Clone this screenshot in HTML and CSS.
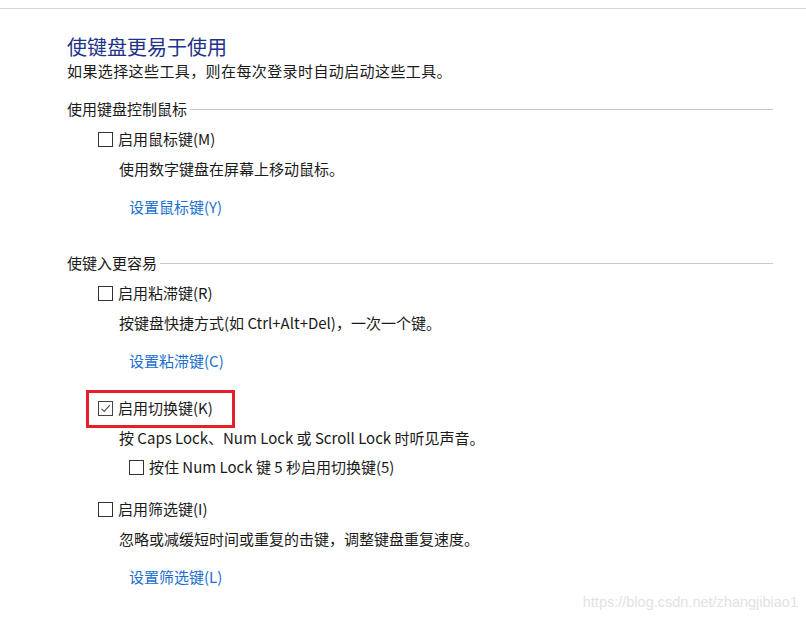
FILE: index.html
```html
<!DOCTYPE html>
<html lang="zh-CN">
<head>
    <meta charset="UTF-8">
    <title>使键盘更易于使用</title>
    <link rel="stylesheet" href="styles.css">
</head>
<body>
    <div class="top-line"></div>

    <div class="content">
        <h1 class="title">使键盘更易于使用</h1>
        <p class="subtitle">如果选择这些工具，则在每次登录时自动启动这些工具。</p>

        <!-- 鼠标键 -->
        <div class="group-header"><span>使用键盘控制鼠标</span></div>
        <div class="option">
            <span class="box"></span>启用鼠标键(M)
        </div>
        <p class="desc">使用数字键盘在屏幕上移动鼠标。</p>
        <a class="link">设置鼠标键(Y)</a>

        <!-- 键入 -->
        <div class="group-header group-two"><span>使键入更容易</span></div>
        <div class="option">
            <span class="box"></span>启用粘滞键(R)
        </div>
        <p class="desc">按键盘快捷方式(如 Ctrl+Alt+Del)，一次一个键。</p>
        <a class="link">设置粘滞键(C)</a>

        <div class="option option-marked">
            <span class="box checked">
                <svg width="13" height="13" viewBox="0 0 13 13"><path d="M2.5 6.8 L5.2 9.5 L10.8 3.2" fill="none" stroke="#555" stroke-width="1.2"/></svg>
            </span>启用切换键(K)
            <div class="mark"></div>
        </div>
        <p class="desc">按 Caps Lock、Num Lock 或 Scroll Lock 时听见声音。</p>
        <div class="option sub-option">
            <span class="box"></span>按住 Num Lock 键 5 秒启用切换键(5)
        </div>

        <div class="option option-filter">
            <span class="box"></span>启用筛选键(I)
        </div>
        <p class="desc">忽略或减缓短时间或重复的击键，调整键盘重复速度。</p>
        <a class="link">设置筛选键(L)</a>
    </div>

    <div class="watermark">https://blog.csdn.net/zhangjibiao1</div>
</body>
</html>
```

FILE: styles.css
```css
body {
    margin: 0;
    background: #fff;
    color: #1a1a1a;
    font-family: "Noto Sans CJK SC", "Noto Sans", sans-serif;
    font-size: 15px;
    width: 806px;
    height: 620px;
    overflow: hidden;
    position: relative;
}
.top-line {
    margin-top: 8px;
    height: 1px;
    background: #d6d6d6;
}
.content {
    padding: 0 33px 0 67px;
}
.title {
    margin: 25px 0 0;
    font-size: 20px;
    font-weight: normal;
    line-height: 26px;
    color: #1e3287;
}
.subtitle {
    margin: 0;
    line-height: 22px;
    letter-spacing: 0.4px;
}
.group-header {
    display: flex;
    align-items: center;
    margin-top: 16px;
    line-height: 22px;
    font-size: 15px;
}
.group-header::after {
    content: "";
    flex: 1;
    height: 1px;
    background: #c8c8c8;
    margin-left: 3px;
}
.group-two {
    margin-top: 34px;
}
.option {
    display: flex;
    align-items: center;
    margin: 8px 0 0 31px;
    line-height: 22px;
    position: relative;
}
.box {
    width: 13px;
    height: 13px;
    border: 1px solid #333;
    margin-right: 5px;
    display: flex;
    align-items: center;
    justify-content: center;
}
.checked {
    border-color: #444;
}
.option-marked {
    margin-top: 25px;
}
.mark {
    position: absolute;
    left: -12px;
    top: -7px;
    width: 143px;
    height: 32px;
    border: 3px solid #e5202c;
}
.desc {
    margin: 8px 0 0 52px;
    line-height: 22px;
}
.link {
    display: block;
    margin: 16px 0 0 62px;
    line-height: 22px;
    color: #1a6fd0;
}
.sub-option {
    margin: 7px 0 0 62px;
}
.option-filter {
    margin-top: 20px;
}
.watermark {
    position: absolute;
    right: 8px;
    top: 592px;
    font-family: "Liberation Sans", Arial, sans-serif;
    font-size: 14.5px;
    line-height: 20px;
    color: #e2e2e2;
}
```
